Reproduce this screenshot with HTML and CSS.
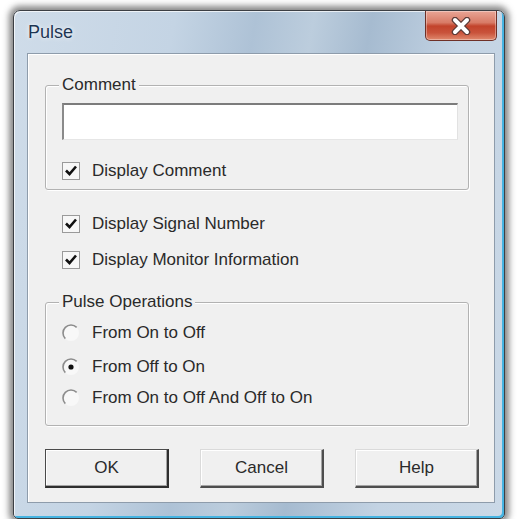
FILE: index.html
```html
<!DOCTYPE html>
<html lang="en">
<head>
  <meta charset="UTF-8" />
  <title>Pulse</title>
  <link rel="stylesheet" href="styles.css">
</head>
<body>
  <div class="window">
    <div class="title-bar">
      <span class="title">Pulse</span>
      <button class="close-btn" title="Close">
        <svg width="30" height="18" viewBox="0 0 30 18">
          <path d="M9 3 L21 15 M21 3 L9 15" stroke="#5b3a36" stroke-width="6.5" stroke-linecap="round" />
          <path d="M9 3 L21 15 M21 3 L9 15" stroke="#ffffff" stroke-width="4" stroke-linecap="round" />
        </svg>
      </button>
    </div>

    <div class="content">
      <div class="group comment-group">
        <div class="group-title">Comment</div>
        <input type="text" class="comment-input" />
        <label class="check-row first-check">
          <svg class="box" width="18" height="18" viewBox="0 0 18 18">
            <rect x="0.5" y="0.5" width="17" height="17" fill="#f7f7f7" stroke="#9a9a9a" />
            <path d="M4 8.5 L7.5 12 L14 4.5" fill="none" stroke="#111" stroke-width="2.6" />
          </svg>
          <span>Display Comment</span>
        </label>
      </div>

      <label class="check-row signal-check">
        <svg class="box" width="18" height="18" viewBox="0 0 18 18">
          <rect x="0.5" y="0.5" width="17" height="17" fill="#f7f7f7" stroke="#9a9a9a" />
          <path d="M4 8.5 L7.5 12 L14 4.5" fill="none" stroke="#111" stroke-width="2.6" />
        </svg>
        <span>Display Signal Number</span>
      </label>
      <label class="check-row monitor-check">
        <svg class="box" width="18" height="18" viewBox="0 0 18 18">
          <rect x="0.5" y="0.5" width="17" height="17" fill="#f7f7f7" stroke="#9a9a9a" />
          <path d="M4 8.5 L7.5 12 L14 4.5" fill="none" stroke="#111" stroke-width="2.6" />
        </svg>
        <span>Display Monitor Information</span>
      </label>

      <div class="group pulse-group">
        <div class="group-title">Pulse Operations</div>
        <label class="radio-row r1">
          <svg class="dot" width="18" height="18" viewBox="0 0 18 18">
            <circle cx="9" cy="9" r="8" fill="#f8f8f8" />
            <path d="M14.66 3.34 A8 8 0 0 0 3.34 14.66" fill="none" stroke="#8c8c8c" stroke-width="1.6" />
          </svg>
          <span>From On to Off</span>
        </label>
        <label class="radio-row r2">
          <svg class="dot" width="18" height="18" viewBox="0 0 18 18">
            <circle cx="9" cy="9" r="8" fill="#f8f8f8" />
            <path d="M14.66 3.34 A8 8 0 0 0 3.34 14.66" fill="none" stroke="#8c8c8c" stroke-width="1.6" />
            <circle cx="9" cy="9" r="2.6" fill="#111" />
          </svg>
          <span>From Off to On</span>
        </label>
        <label class="radio-row r3">
          <svg class="dot" width="18" height="18" viewBox="0 0 18 18">
            <circle cx="9" cy="9" r="8" fill="#f8f8f8" />
            <path d="M14.66 3.34 A8 8 0 0 0 3.34 14.66" fill="none" stroke="#8c8c8c" stroke-width="1.6" />
          </svg>
          <span>From On to Off And Off to On</span>
        </label>
      </div>

      <div class="buttons">
        <button class="btn default-btn">OK</button>
        <button class="btn">Cancel</button>
        <button class="btn">Help</button>
      </div>
    </div>
  </div>
</body>
</html>
```

FILE: styles.css
```css
body {
  margin: 0;
  background: #ffffff;
  font-family: 'Liberation Sans', Arial, sans-serif;
}

.window {
  box-sizing: border-box;
  width: 492px;
  height: 509px;
  margin: 10px 0 0 13px;
  padding: 0 9px 15px 13px;
  border: 1px solid #3c3f44;
  border-radius: 7px 7px 5px 5px;
  background: linear-gradient(100deg, #cfdce9 0%, #c4d4e4 28%, #aec2d6 42%, #bccddd 52%, #a6bbd0 62%, #c3d3e3 78%, #cbd9e7 100%);
  box-shadow: inset 1px 1px 0 rgba(255, 255, 255, 0.7), inset -2px -2px 0 #45b4e2, 0 0 6px 4px rgba(70, 70, 70, 0.65);
}

.title-bar {
  height: 42px;
  display: flex;
  justify-content: space-between;
  align-items: flex-start;
  padding-left: 1px;
  margin-right: -2px;
}

.title {
  margin-top: 11px;
  font-size: 18px;
  line-height: 20px;
  color: #1d3553;
  text-shadow: 0 0 5px rgba(255, 255, 255, 0.9), 0 0 1px rgba(255, 255, 255, 0.9);
}

.close-btn {
  width: 72px;
  height: 30px;
  margin: 0;
  padding: 0;
  border: 1px solid #6e3027;
  border-top: none;
  border-radius: 0 0 5px 5px;
  background: linear-gradient(#e9a596 0%, #d87b66 40%, #c2432b 52%, #c9533b 75%, #e08a6e 100%);
  box-shadow: inset 0 0 0 1px rgba(255, 255, 255, 0.35);
  display: flex;
  align-items: center;
  justify-content: center;
}

.content {
  box-sizing: border-box;
  height: 450px;
  padding: 31px 10px 0 17px;
  background: #f0f0f0;
  border: 1px solid #8e9cab;
  box-shadow: inset 1px 1px 0 #ffffff;
  color: #2a2a2a;
  font-size: 17px;
}

.group {
  box-sizing: border-box;
  width: 424px;
  border: 1px solid #b2b2b2;
  border-radius: 3px;
  box-shadow: inset 1px 1px 0 #ffffff, 1px 1px 0 #ffffff;
  padding: 0 10px 0 16px;
}

.group-title {
  width: fit-content;
  margin: -11px 0 0 -3px;
  padding: 0 3px;
  line-height: 20px;
  background: #f0f0f0;
}

.comment-group {
  height: 105px;
}

.comment-input {
  display: block;
  box-sizing: border-box;
  width: 100%;
  height: 37px;
  margin-top: 8px;
  background: #fff;
  border-style: solid;
  border-width: 2px 1px 1px 2px;
  border-color: #7c7c7c #e2e2e2 #e6e6e6 #8a8a8a;
  outline: none;
}

.check-row,
.radio-row {
  display: flex;
  align-items: center;
  gap: 12px;
  height: 22px;
  line-height: 22px;
}

.first-check {
  margin-top: 20px;
}

.signal-check {
  margin: 23px 0 0 17px;
}

.monitor-check {
  margin: 14px 0 0 17px;
}

.pulse-group {
  height: 124px;
  margin-top: 31px;
}

.r1 {
  margin-top: 10px;
}

.r2 {
  margin-top: 12px;
}

.r3 {
  margin-top: 9px;
}

.buttons {
  display: flex;
  gap: 31px;
  margin-top: 23px;
}

.btn {
  flex: none;
  box-sizing: border-box;
  width: 124px;
  height: 39px;
  padding: 0;
  background: #f0f0f0;
  font-family: 'Liberation Sans', Arial, sans-serif;
  font-size: 17px;
  color: #2a2a2a;
  border-style: solid;
  border-width: 1px 2px 2px 1px;
  border-color: #dadada #4e4e4e #4e4e4e #dadada;
  box-shadow: inset -1px -1px 0 #a4a4a4, inset 1px 1px 0 #ffffff;
}

.default-btn {
  border-color: #4a4a4a #2e2e2e #2e2e2e #4a4a4a;
}
```
